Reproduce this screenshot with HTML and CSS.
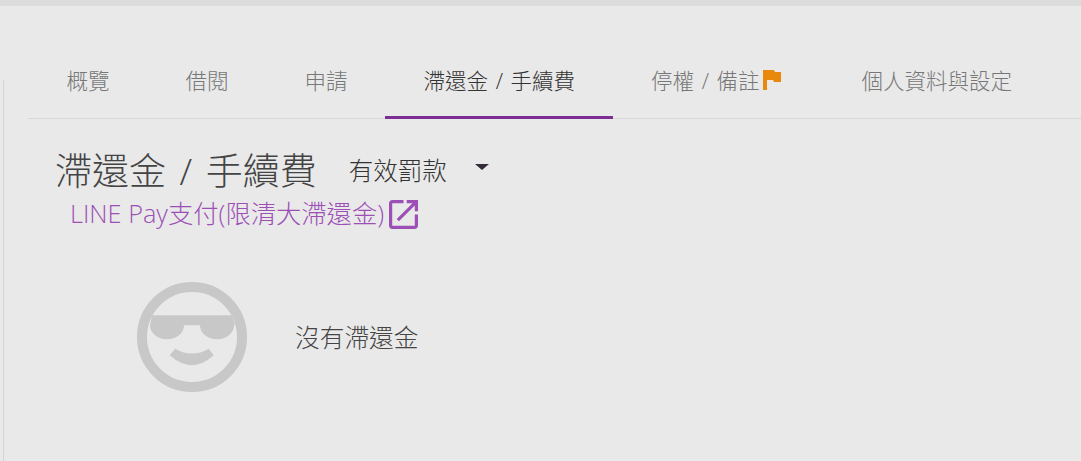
FILE: index.html
```html
<!DOCTYPE html>
<html lang="zh-Hant">
<head>
  <meta charset="UTF-8">
  <meta name="viewport" content="width=device-width, initial-scale=1.0">
  <title>滯還金 / 手續費</title>
  <link rel="stylesheet" href="styles.css">
</head>
<body>
  <div class="top-bar"></div>
  <div class="layout">
    <div class="side-rule"></div>
    <main class="content">
      <nav class="tabs">
        <a class="tab">概覽</a>
        <a class="tab">借閱</a>
        <a class="tab">申請</a>
        <a class="tab tab-active">滯還金 / 手續費</a>
        <a class="tab"><span>停權 / 備註</span><svg class="flag-icon" viewBox="0 0 18 20"><path d="M0 0H11L12 2H18V12H11L10 10H4V20H0Z"/></svg></a>
        <a class="tab">個人資料與設定</a>
      </nav>

      <div class="title-row">
        <h1 class="page-title">滯還金 / 手續費</h1>
        <span class="filter">有效罰款</span>
        <span class="caret"></span>
      </div>
      <a class="pay-link"><span>LINE Pay支付(限清大滯還金)</span><svg class="link-icon" viewBox="3 3 18 18"><path d="M19 19H5V5h7V3H5c-1.11 0-2 .9-2 2v14c0 1.1.89 2 2 2h14c1.1 0 2-.9 2-2v-7h-2v7zM14 3v2h3.59l-9.83 9.83 1.41 1.41L19 6.41V10h2V3h-7z"/></svg></a>

      <div class="empty-state">
        <svg class="cool-face" viewBox="0 0 110 110">
          <circle cx="55" cy="55" r="50" fill="none" stroke="#c8c8c8" stroke-width="10"/>
          <path d="M15 33.3H95L98 43.3H97A17 14 0 0 1 63 43.3H47A17 14 0 0 1 13 43.3Z" fill="#c8c8c8"/>
          <path d="M38.3 66.7Q55 76.5 71.7 66.7L76.7 73.3Q55 93 32.7 73.3Z" fill="#c8c8c8"/>
        </svg>
        <p class="empty-text">沒有滯還金</p>
      </div>
    </main>
  </div>
</body>
</html>
```

FILE: styles.css
```css
body {
  font-family: "Open Sans", "Noto Sans CJK TC", sans-serif;
  font-weight: 300;
  background-color: #e9e9e9;
  color: #444;
  margin: 0;
  height: 461px;
  overflow: hidden;
}
.top-bar {
  height: 6px;
  background-color: #dcdcdc;
}
.layout {
  display: flex;
}
.side-rule {
  width: 1px;
  height: 381px;
  margin: 74px 0 0 3px;
  background-color: #d4d4d4;
}
.content {
  flex: 1;
  margin-left: 24px;
}
.tabs {
  display: flex;
  height: 112px;
  align-items: flex-end;
  border-bottom: 1px solid #d8d8d8;
}
.tab {
  display: flex;
  align-items: center;
  gap: 3px;
  height: 76px;
  padding: 0 37.5px 0 38.5px;
  font-size: 21.5px;
  word-spacing: 2px;
  color: #777;
  box-sizing: border-box;
  margin-bottom: -1px;
  border-bottom: 3px solid transparent;
  white-space: nowrap;
}
.tab-active {
  color: #333;
  border-bottom-color: #7d2f96;
}
.flag-icon {
  width: 18px;
  height: 20px;
  margin-right: 5px;
  fill: #e8890c;
}
.title-row {
  display: flex;
  align-items: center;
  margin: 26px 0 0 27px;
  height: 48px;
}
.page-title {
  margin: 0;
  font-size: 37px;
  font-weight: 300;
  word-spacing: 4px;
  color: #444;
}
.filter {
  margin-left: 32px;
  font-size: 24.5px;
  color: #333;
}
.caret {
  width: 0;
  height: 0;
  margin-left: 28px;
  margin-top: -5px;
  border-left: 7px solid transparent;
  border-right: 7px solid transparent;
  border-top: 6px solid #332b3a;
}
.pay-link {
  display: flex;
  align-items: center;
  gap: 5px;
  margin: 2px 0 0 42px;
  height: 34px;
  font-size: 25.3px;
  color: #9c50b6;
}
.link-icon {
  width: 29px;
  height: 29px;
  margin-top: 5px;
  fill: #9c50b6;
}
.empty-state {
  display: flex;
  align-items: center;
  margin: 53px 0 0 109px;
}
.cool-face {
  width: 110px;
  height: 110px;
}
.empty-text {
  margin: 0 0 2px 48px;
  font-size: 24.7px;
  color: #444;
}
```
